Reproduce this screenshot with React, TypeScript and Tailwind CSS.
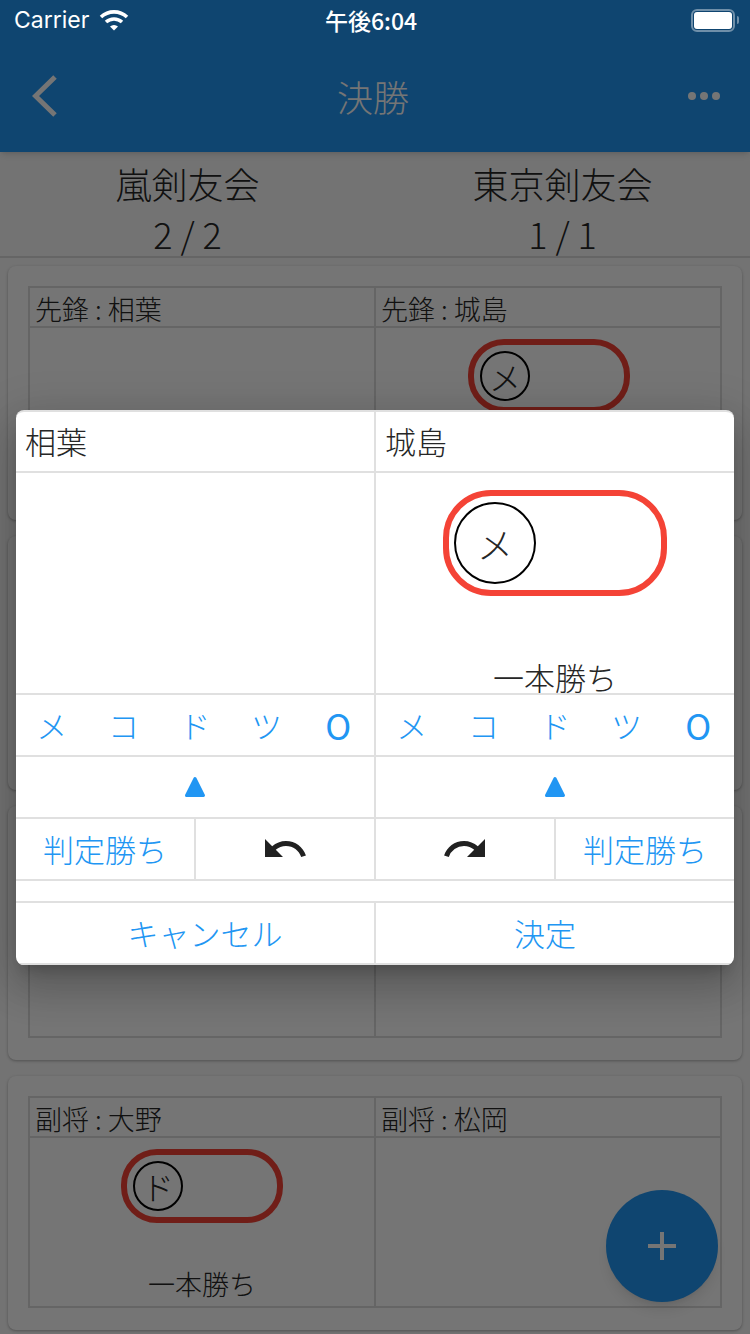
import { MdRedo, MdUndo } from "react-icons/md"

const jp = "font-['Noto_Sans_CJK_JP',sans-serif]"

function Pill({ kana, large }: { kana: string; large?: boolean }) {
    return (
        <div className={large
            ? "flex h-[106px] w-[224px] items-center rounded-[48px] border-[6px] border-[#f44336] pl-[5px]"
            : "flex h-[74px] w-[162px] items-center rounded-[36px] border-[6px] border-[#f44336] pl-[6px]"}>
            <div className={large
                ? "flex h-[82px] w-[82px] items-center justify-center rounded-full border-2 border-black text-[36px] font-light text-[#262626]"
                : "flex h-[50px] w-[50px] items-center justify-center rounded-full border-2 border-black text-[32px] font-light text-[#262626]"}>
                {kana}
            </div>
        </div>
    )
}

function MatchCell({ kana, result }: { kana?: string; result?: string }) {
    return (
        <div className="flex h-[168px] flex-col items-center pt-[11px]">
            {kana && <Pill kana={kana} />}
            {result && <div className="mt-auto pb-[4px] text-[27px] leading-[36px] font-light text-[#262626]">{result}</div>}
        </div>
    )
}

function MatchCard({ left, right, leftKana, rightKana }: { left?: string; right?: string; leftKana?: string; rightKana?: string }) {
    return (
        <div className="h-[254px] rounded-lg bg-white px-5 pt-5 shadow-[0_1px_3px_rgba(0,0,0,0.3)]">
            <div className="grid grid-cols-[346px_346px] border-2 border-[#dcdcdc]">
                <div className="h-[40px] border-r-2 border-b-2 border-[#dcdcdc] pl-[5px] text-[27px] leading-[42px] font-light text-[#262626]">{left}</div>
                <div className="h-[40px] border-b-2 border-[#dcdcdc] pl-[5px] text-[27px] leading-[42px] font-light text-[#262626]">{right}</div>
                <div className="border-r-2 border-[#dcdcdc]">
                    <MatchCell kana={leftKana} result={leftKana && "一本勝ち"} />
                </div>
                <div>
                    <MatchCell kana={rightKana} result={rightKana && "一本勝ち"} />
                </div>
            </div>
        </div>
    )
}

function Triangle() {
    return (
        <svg width="22" height="22" viewBox="0 0 22 22" fill="#2196f3" stroke="#2196f3" strokeWidth="3" strokeLinejoin="round">
            <path d="M11 2.5 L19.5 19.5 L2.5 19.5 Z" />
        </svg>
    )
}

function StrikeRow() {
    const strikes = ["メ", "コ", "ド", "ツ", "O"]
    return (
        <>
            {strikes.map((s) => (
                <div key={s} className={s === "O"
                    ? "flex-1 text-center text-[35px] leading-[60px] text-[#2196f3]"
                    : "flex-1 text-center text-[31px] leading-[60px] font-light text-[#2196f3]"}>
                    {s}
                </div>
            ))}
        </>
    )
}

function StatusBar() {
    return (
        <div className="absolute top-0 left-0 flex h-10 w-full items-center justify-between pr-[11px] pl-[14px] text-white">
            <div className="flex items-center gap-[10px]">
                <span className="font-['Inter',sans-serif] text-[23px] leading-none">Carrier</span>
                <svg width="30" height="22" viewBox="0 0 30 22" fill="none" stroke="white" strokeWidth="3.6">
                    <path d="M2 8 A19 19 0 0 1 28 8" />
                    <path d="M7 13 A12 12 0 0 1 23 13" />
                    <path d="M11 17.6 L15 21.5 L19 17.6 A6 6 0 0 0 11 17.6 Z" fill="white" stroke="none" />
                </svg>
            </div>
            <span className={`absolute left-[325px] ${jp} text-[23px] leading-none font-medium`}>午後6:04</span>
            <div className="flex items-center gap-[2px]">
                <div className="h-[23px] w-[44px] rounded-[6px] border-2 border-white/40 p-[1px]">
                    <div className="h-full w-full rounded-[3px] bg-white" />
                </div>
                <div className="h-[8px] w-[2px] rounded-r bg-white/40" />
            </div>
        </div>
    )
}

export default function App() {
    return (
        <div className={`relative h-[1334px] w-[750px] overflow-hidden bg-[#fafafa] ${jp} text-[#262626]`}>
            <header className="flex h-[152px] items-center justify-between bg-[#2196f3] pt-10 pr-[30px] pl-[32px] text-white shadow-md">
                <svg width="26" height="42" viewBox="0 0 26 42" fill="none" stroke="white" strokeWidth="5">
                    <path d="M23 2 L3.5 21 L23 40" />
                </svg>
                <div className="text-[36px] font-light">決勝</div>
                <div className="flex gap-1">
                    <div className="h-2 w-2 rounded-full bg-white" />
                    <div className="h-2 w-2 rounded-full bg-white" />
                    <div className="h-2 w-2 rounded-full bg-white" />
                </div>
            </header>

            <div className="grid h-[106px] grid-cols-2 border-b-2 border-[#dcdcdc] text-center text-[36px] font-light">
                <div className="leading-[50px] pt-[6px]">嵐剣友会<div>2 / 2</div></div>
                <div className="leading-[50px] pt-[6px]">東京剣友会<div>1 / 1</div></div>
            </div>

            <div className="flex flex-col gap-4 px-2 pt-2">
                <MatchCard left="先鋒 : 相葉" right="先鋒 : 城島" rightKana="メ" />
                <MatchCard />
                <MatchCard />
                <MatchCard left="副将 : 大野" right="副将 : 松岡" leftKana="ド" />
            </div>

            <button className="absolute top-[1190px] left-[606px] flex h-[112px] w-[112px] items-center justify-center rounded-full bg-[#2196f3] shadow-lg">
                <svg width="30" height="30" viewBox="0 0 30 30" stroke="white" strokeWidth="4">
                    <path d="M15 1 V29 M1 15 H29" />
                </svg>
            </button>

            <div className="absolute inset-0 bg-black/[0.54] pt-[410px] pl-4">
                <div className="w-[718px] overflow-hidden rounded-lg border-t-2 border-[#e0e0e0] bg-white shadow-[0_24px_38px_3px_rgba(0,0,0,0.14),0_9px_46px_8px_rgba(0,0,0,0.12),0_11px_15px_-7px_rgba(0,0,0,0.2)]">
                    <div className="flex h-[61px] border-b-2 border-[#e0e0e0] text-[31px] leading-[58px] font-light">
                        <div className="w-[360px] border-r-2 border-[#e0e0e0] pl-[9px]">相葉</div>
                        <div className="flex-1 pl-[9px]">城島</div>
                    </div>
                    <div className="flex h-[222px] border-b-2 border-[#e0e0e0]">
                        <div className="w-[360px] border-r-2 border-[#e0e0e0]" />
                        <div className="flex flex-1 flex-col items-center pt-[17px]">
                            <Pill kana="メ" large />
                            <div className="mt-auto text-[31px] leading-[32px] font-light">一本勝ち</div>
                        </div>
                    </div>
                    <div className="flex h-[62px] border-b-2 border-[#e0e0e0]">
                        <div className="flex w-[360px] border-r-2 border-[#e0e0e0]"><StrikeRow /></div>
                        <div className="flex flex-1"><StrikeRow /></div>
                    </div>
                    <div className="flex h-[62px] border-b-2 border-[#e0e0e0]">
                        <div className="flex w-[360px] items-center justify-center border-r-2 border-[#e0e0e0]"><Triangle /></div>
                        <div className="flex flex-1 items-center justify-center"><Triangle /></div>
                    </div>
                    <div className="flex h-[62px] border-b-2 border-[#e0e0e0] text-center text-[31px] leading-[60px] font-light text-[#2196f3]">
                        <div className="w-[180px] border-r-2 border-[#e0e0e0]">判定勝ち</div>
                        <div className="flex w-[180px] items-center justify-center border-r-2 border-[#e0e0e0] text-[#212121]"><MdUndo size={48} /></div>
                        <div className="flex w-[180px] items-center justify-center border-r-2 border-[#e0e0e0] text-[#212121]"><MdRedo size={48} /></div>
                        <div className="flex-1">判定勝ち</div>
                    </div>
                    <div className="h-[22px] border-b-2 border-[#e0e0e0]" />
                    <div className="flex h-[62px] border-b-2 border-[#e0e0e0] text-center text-[31px] leading-[60px] font-light text-[#2196f3]">
                        <div className="w-[360px] border-r-2 border-[#e0e0e0] pl-5">キャンセル</div>
                        <div className="flex-1 pr-5">決定</div>
                    </div>
                </div>
            </div>

            <StatusBar />
        </div>
    )
}
